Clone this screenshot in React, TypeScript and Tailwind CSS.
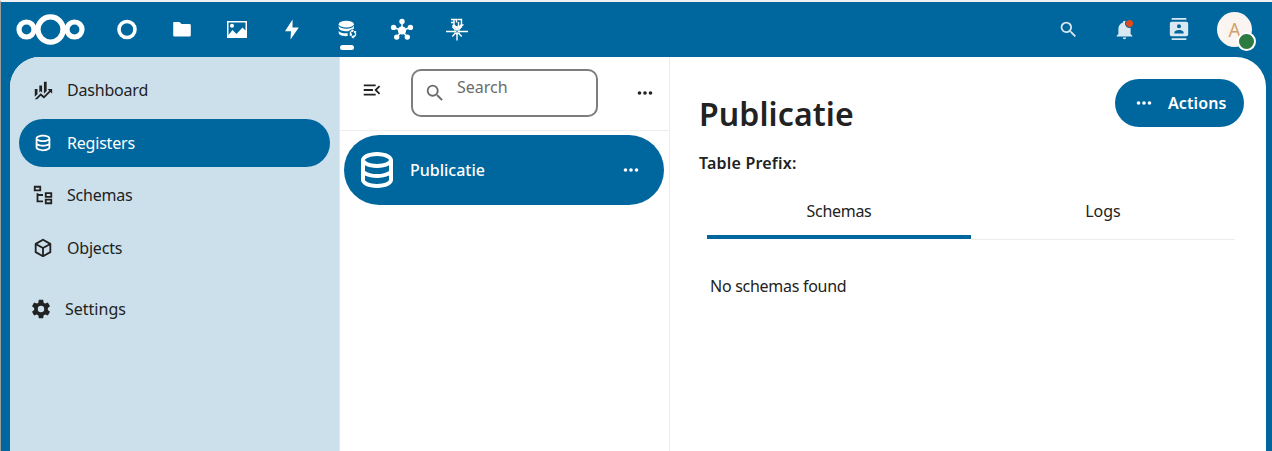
import type { ReactNode } from "react";

const paths = {
  database:
    "M12 3C7.58 3 4 4.79 4 7V17C4 19.21 7.59 21 12 21S20 19.21 20 17V7C20 4.79 16.42 3 12 3M18 17C18 17.5 15.87 19 12 19S6 17.5 6 17V14.77C7.61 15.55 9.72 16 12 16S16.39 15.55 18 14.77V17M18 12.45C16.7 13.4 14.42 14 12 14C9.58 14 7.3 13.4 6 12.45V9.64C7.47 10.47 9.61 11 12 11C14.39 11 16.53 10.47 18 9.64V12.45M12 9C8.13 9 6 7.5 6 7S8.13 5 12 5C15.87 5 18 6.5 18 7S15.87 9 12 9Z",
  cog: "M12,15.5A3.5,3.5 0 0,1 8.5,12A3.5,3.5 0 0,1 12,8.5A3.5,3.5 0 0,1 15.5,12A3.5,3.5 0 0,1 12,15.5M19.43,12.97C19.47,12.65 19.5,12.33 19.5,12C19.5,11.67 19.47,11.34 19.43,11L21.54,9.37C21.73,9.22 21.78,8.95 21.66,8.73L19.66,5.27C19.54,5.05 19.27,4.96 19.05,5.05L16.56,6.05C16.04,5.66 15.5,5.32 14.87,5.07L14.5,2.42C14.46,2.18 14.25,2 14,2H10C9.75,2 9.54,2.18 9.5,2.42L9.13,5.07C8.5,5.32 7.96,5.66 7.44,6.05L4.95,5.05C4.73,4.96 4.46,5.05 4.34,5.27L2.34,8.73C2.21,8.95 2.27,9.22 2.46,9.37L4.57,11C4.53,11.34 4.5,11.67 4.5,12C4.5,12.33 4.53,12.65 4.57,12.97L2.46,14.63C2.27,14.78 2.21,15.05 2.34,15.27L4.34,18.73C4.46,18.95 4.73,19.03 4.95,18.95L7.44,17.94C7.96,18.34 8.5,18.68 9.13,18.93L9.5,21.58C9.54,21.82 9.75,22 10,22H14C14.25,22 14.46,21.82 14.5,21.58L14.87,18.93C15.5,18.67 16.04,18.34 16.56,17.94L19.05,18.95C19.27,19.03 19.54,18.95 19.66,18.73L21.66,15.27C21.78,15.05 21.73,14.78 21.54,14.63L19.43,12.97Z",
  cube: "M21,16.5C21,16.88 20.79,17.21 20.47,17.38L12.57,21.82C12.41,21.94 12.21,22 12,22C11.79,22 11.59,21.94 11.43,21.82L3.53,17.38C3.21,17.21 3,16.88 3,16.5V7.5C3,7.12 3.21,6.79 3.53,6.62L11.43,2.18C11.59,2.06 11.79,2 12,2C12.21,2 12.41,2.06 12.57,2.18L20.47,6.62C20.79,6.79 21,7.12 21,7.5V16.5M12,4.15L6.04,7.5L12,10.85L17.96,7.5L12,4.15M5,15.91L11,19.29V12.58L5,9.21V15.91M19,15.91V9.21L13,12.58V19.29L19,15.91Z",
  tree: "M12 13H7V18H12V20H5V10H7V11H12V13M8 4V6H4V4H8M10 2H2V8H10V2M20 11V13H16V11H20M22 9H14V15H22V9M20 18V20H16V18H20M22 16H14V22H22V16Z",
  finance:
    "M6,16.5L3,19.44V11H6M11,14.66L9.43,13.32L8,14.64V7H11M16,13L13,16V3H16M18.81,12.81L17,11H22V16L20.21,14.21L13,21.36L9.53,18.34L5.75,22H3L9.47,15.66L13,18.64",
  magnify:
    "M9.5,3A6.5,6.5 0 0,1 16,9.5C16,11.11 15.41,12.59 14.44,13.73L14.71,14H15.5L20.5,19L19,20.5L14,15.5V14.71L13.73,14.44C12.59,15.41 11.11,16 9.5,16A6.5,6.5 0 0,1 3,9.5A6.5,6.5 0 0,1 9.5,3M9.5,5C7,5 5,7 5,9.5C5,12 7,14 9.5,14C12,14 14,12 14,9.5C14,7 12,5 9.5,5Z",
  contacts:
    "M20,0H4V2H20V0M4,24H20V22H4V24M20,4H4A2,2 0 0,0 2,6V18A2,2 0 0,0 4,20H20A2,2 0 0,0 22,18V6A2,2 0 0,0 20,4M12,6.75A2.25,2.25 0 0,1 14.25,9A2.25,2.25 0 0,1 12,11.25A2.25,2.25 0 0,1 9.75,9A2.25,2.25 0 0,1 12,6.75M17,17H7V15.5C7,13.83 10.33,13 12,13C13.67,13 17,13.83 17,15.5V17Z",
  menuOpen:
    "M21,15.61L19.59,17L14.58,12L19.59,7L21,8.39L17.44,12L21,15.61M3,6H16V8H3V6M3,13V11H13V13H3M3,18V16H16V18H3Z",
  bell: "M21,19V20H3V19L5,17V11C5,7.9 7.03,5.17 10,4.29C10,4.19 10,4.1 10,4A2,2 0 0,1 12,2A2,2 0 0,1 14,4C14,4.1 14,4.19 14,4.29C16.97,5.17 19,7.9 19,11V17L21,19M14,21A2,2 0 0,1 12,23A2,2 0 0,1 10,21",
  dots: "M16,12A2,2 0 0,1 18,10A2,2 0 0,1 20,12A2,2 0 0,1 18,14A2,2 0 0,1 16,12M10,12A2,2 0 0,1 12,10A2,2 0 0,1 14,12A2,2 0 0,1 12,14A2,2 0 0,1 10,12M4,12A2,2 0 0,1 6,10A2,2 0 0,1 8,12A2,2 0 0,1 6,14A2,2 0 0,1 4,12Z",
};

function Icon({ name, size = 22 }: { name: keyof typeof paths; size?: number }) {
  return (
    <svg width={size} height={size} viewBox="0 0 24 24" fill="currentColor" className="shrink-0">
      <path d={paths[name]} />
    </svg>
  );
}

function Logo() {
  return (
    <svg width="70" height="34" viewBox="0 0 70 34" fill="none" stroke="#fff" className="shrink-0">
      <circle cx="35.500" cy="16.500" r="12.600" strokeWidth="5.400" />
      <circle cx="11.500" cy="16.500" r="7.500" strokeWidth="5.200" />
      <circle cx="59.500" cy="16.500" r="7.500" strokeWidth="5.200" />
    </svg>
  );
}

function AppIcon({ children, active }: { children: ReactNode; active?: boolean }) {
  return (
    <div className="relative flex h-full w-[55px] items-center justify-center">
      <svg width="24" height="24" viewBox="0 0 24 24" fill="#fff" className="shrink-0">
        {children}
      </svg>
      {active && <span className="absolute bottom-[7px] left-[21px] h-[5px] w-[14px] rounded-full bg-white" />}
    </div>
  );
}

function TopBar() {
  return (
    <header className="flex h-[55px] shrink-0 items-center pl-[14px] text-[#d9e8f1]">
      <Logo />
      <div className="ml-[14px] flex h-full">
        <AppIcon>
          <circle cx="12" cy="11.500" r="8" fill="none" stroke="#fff" strokeWidth="3.600" />
        </AppIcon>
        <AppIcon>
          <path d="M4 4h5.500l2 2h8a1.300 1.300 0 0 1 1.300 1.300v9.900a1.300 1.300 0 0 1-1.300 1.300h-15a1.300 1.300 0 0 1-1.300-1.300V5A1 1 0 0 1 4 4z" />
        </AppIcon>
        <AppIcon>
          <path fillRule="evenodd" d="M2 3h20v17H2zM3.500 4.500v12.500l4-5 4 4 6-6.500 3 3V4.500z" />
          <circle cx="7" cy="7.800" r="2" />
        </AppIcon>
        <AppIcon>
          <path d="M12.600 1.500L5 13.200h6L10.500 21.500 18.800 9.500h-6.300z" />
        </AppIcon>
        <AppIcon active>
          <ellipse cx="11.300" cy="6.200" rx="7.600" ry="3.400" />
          <path d="M3.700 7.800c1.200 2.300 4.400 3 7.600 3s6.400-.7 7.600-3v3c-2 .1-3.800.900-4.800 2.300-4.300.7-10-.4-10.400-3.300z" />
          <path d="M3.700 12.900c1.200 2 5 2.700 9 2.400-.2.900-.1 1.800.1 2.700-4 .6-8.900-.6-9.100-3z" />
          <path
            d="M17.200 12.500a3.300 3.300 0 0 0-1 5.300M18.200 19a3.300 3.300 0 0 0 1.600-5.400"
            fill="none"
            stroke="#fff"
            strokeWidth="1.300"
          />
          <path d="M16.800 10.900l2.400 1.800-2.400 1.900zM18.600 17.100v3.700l-2.500-1.800zM14.400 17.600h2.600V15zM19 13h2.500L19 15.500z" />
        </AppIcon>
        <AppIcon>
          <path d="M12 13V3.500M12 12.500L3.500 9.500M12 12.500l8.500-3M12 12.500L6.500 19.500M12 12.500l5.500 7" stroke="#fff" strokeWidth="1.500" />
          <circle cx="12" cy="12.500" r="4.100" />
          <circle cx="12" cy="3.500" r="2.700" />
          <circle cx="3.600" cy="9.400" r="2.700" />
          <circle cx="20.400" cy="9.400" r="2.700" />
          <circle cx="6.700" cy="19.100" r="2.700" />
          <circle cx="17.300" cy="19.100" r="2.700" />
        </AppIcon>
        <AppIcon>
          <path
            d="M1 13.500h22M12 8v14.500M7.300 8.500l9.400 10M16.700 8.500l-9.400 10M6 1.500h5.500v3M9 1.500v5.500l2.800 2.500M6 4.500h3M12.500 1.500h4v8M13.500 4v5.500l3.500-3.500M7.500 7l4 3.500M18.500 6.500l-6 4"
            fill="none"
            stroke="#fff"
            strokeWidth="1.400"
          />
          <path d="M12 9.500l1.400 2.600 2.600 1.400-2.600 1.400L12 17.500l-1.400-2.600L8 13.500l2.600-1.400z" />
          <path d="M10.600 12.100l2.800 2.800M13.400 12.100l-2.800 2.800" stroke="#00679e" strokeWidth="0.800" />
        </AppIcon>
      </div>
      <div className="mr-[20px] ml-auto flex h-full items-center">
        <div className="mr-[35px]">
          <Icon name="magnify" size={21} />
        </div>
        <div className="relative mr-[33px]">
          <Icon name="bell" size={21} />
          <span className="absolute top-[1px] right-[2px] size-[7px] rounded-full bg-[#e04a1c] ring-1 ring-[#00679e]" />
        </div>
        <div className="mr-[27px] -mt-px">
          <Icon name="contacts" />
        </div>
        <div className="relative flex size-[35px] items-center justify-center rounded-full bg-[#faf5f1] text-[19px] text-[#d3a06c]">
          A
          <span className="absolute -right-[4px] -bottom-[4px] size-[19px] rounded-full border-2 border-white bg-[#2d7b41]" />
        </div>
      </div>
    </header>
  );
}

function NavItem({ icon, label, active }: { icon: keyof typeof paths; label: string; active?: boolean }) {
  return (
    <a
      className={
        active
          ? "flex h-12 items-center gap-[13px] rounded-full bg-[#00679e] pl-[13px] text-white"
          : "flex h-12 items-center gap-[13px] rounded-full pl-[13px]"
      }
    >
      <Icon name={icon} />
      <span>{label}</span>
    </a>
  );
}

function Sidebar() {
  return (
    <nav className="flex w-[330px] shrink-0 flex-col border-r border-[#dfe9ef] bg-[#cce0eb] pt-[9px] pr-[9px] pl-[9px] tracking-[-0.2px]">
      <div className="flex flex-col gap-[4.600px]">
        <NavItem icon="finance" label="Dashboard" />
        <NavItem icon="database" label="Registers" active />
        <NavItem icon="tree" label="Schemas" />
        <NavItem icon="cube" label="Objects" />
      </div>
      <div className="-ml-[2px] pt-[13px] tracking-normal">
        <NavItem icon="cog" label="Settings" />
      </div>
    </nav>
  );
}

function RegisterList() {
  return (
    <section className="flex w-[330px] shrink-0 flex-col border-r border-[#ededed]">
      <div className="flex h-[74px] shrink-0 items-start border-b border-[#ededed] pt-3 pr-[13px] pl-[21px]">
        <div className="mt-[10px]">
          <Icon name="menuOpen" />
        </div>
        <div className="ml-[28px] flex h-12 w-[187px] rounded-[10px] border-2 border-[#7d7d7d] pl-[11px] text-[#6b6b6b]">
          <div className="mt-[11px]">
            <Icon name="magnify" />
          </div>
          <span className="mt-[4px] ml-[11px]">Search</span>
        </div>
        <div className="mt-[13px] ml-auto">
          <Icon name="dots" />
        </div>
      </div>
      <div className="mr-[5px] ml-1 mt-1 flex h-[70px] items-center rounded-full bg-[#00679e] pr-[22px] pl-[9px] text-white">
        <Icon name="database" size={48} />
        <span className="ml-[9px] font-medium">Publicatie</span>
        <div className="ml-auto">
          <Icon name="dots" />
        </div>
      </div>
    </section>
  );
}

function Details() {
  return (
    <main className="flex flex-1 flex-col pl-[29px]">
      <div className="flex justify-between pt-[22px] pr-[22px]">
        <h1 className="mt-[12px] text-[32px] leading-[46px] font-semibold tracking-[0.1px]">Publicatie</h1>
        <button className="flex h-12 w-[129px] items-center rounded-full bg-[#00679e] pl-[18px] font-semibold text-white">
          <Icon name="dots" />
          <span className="ml-[13px] tracking-[0.1px]">Actions</span>
        </button>
      </div>
      <p className="mt-[14px] leading-6 font-semibold tracking-[0.200px]">Table Prefix:</p>
      <div className="mt-[8px] ml-2 flex h-[57px] w-[528px] items-start">
        <div className="flex h-14 w-1/2 justify-center border-b-4 border-[#00679e] pt-[16px]">
          <span className="tracking-[-0.3px]">Schemas</span>
        </div>
        <div className="flex h-[57px] w-1/2 justify-center border-b border-[#ededed] pt-[16px]">
          <span>Logs</span>
        </div>
      </div>
      <p className="mt-[34px] ml-[11px] tracking-[-0.280px]">No schemas found</p>
    </main>
  );
}

export default function App() {
  return (
    <div className="flex h-[451px] w-[1272px] flex-col overflow-hidden border-t-2 border-l border-t-[#eff1f2] border-l-[#9b9b9b] bg-[#00679e] font-['Noto_Sans','Open_Sans',sans-serif] text-[16px] leading-6 text-[#222]">
      <TopBar />
      <div className="mr-[6px] ml-[9px] flex min-h-0 flex-1 overflow-hidden rounded-t-[30px] bg-white">
        <Sidebar />
        <RegisterList />
        <Details />
      </div>
    </div>
  );
}
